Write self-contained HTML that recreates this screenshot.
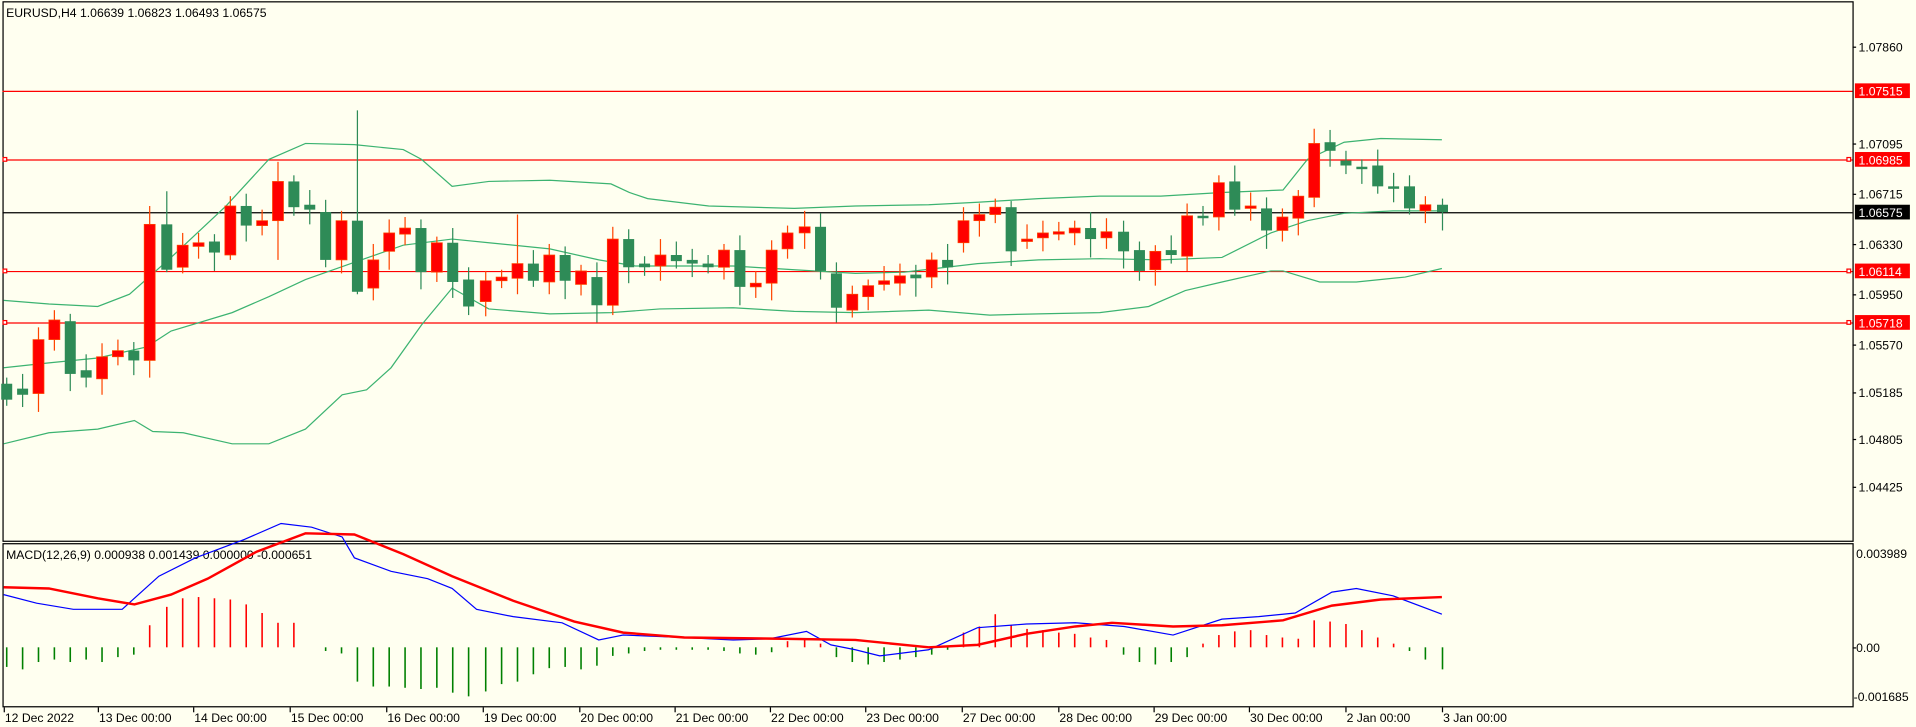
<!DOCTYPE html>
<html><head><meta charset="utf-8"><style>
html,body{margin:0;padding:0;background:#fffff0;overflow:hidden}
svg{display:block}
text{font-family:"Liberation Sans",sans-serif;font-size:10px;fill:#000}
</style></head><body>
<svg id="s" width="1916" height="727" viewBox="0 0 1568 593" preserveAspectRatio="none" xmlns="http://www.w3.org/2000/svg">
<rect width="1568" height="593" fill="#fffff0"/>
<rect x="2.5" y="1.5" width="1514" height="440" fill="none" stroke="#000"/>
<rect x="2.5" y="443.5" width="1514" height="133" fill="none" stroke="#000"/>
<text x="5" y="14">EURUSD,H4  1.06639 1.06823 1.06493 1.06575</text>
<text x="5" y="456">MACD(12,26,9) 0.000938 0.001439 0.000000 -0.000651</text>
<g id="g"></g>
</svg>
<script>
var g=document.getElementById('g'),h='',SP=13.05;
function L(x1,y1,x2,y2,c,w){h+='<line x1="'+x1+'" y1="'+y1+'" x2="'+x2+'" y2="'+y2+'" stroke="'+c+'" stroke-width="'+(w||1)+'"/>';}
function P(pts,c,w){h+='<polyline fill="none" stroke="'+c+'" stroke-width="'+(w||1)+'" points="'+pts.map(function(p){return p.join(',')}).join(' ')+'"/>';}
function T(x,y,s,a){h+='<text x="'+x+'" y="'+y+'"'+(a||'')+'>'+s+'</text>';}
[[74,'1.07515','#f00'],[130,'1.06985','#f00'],[173,'1.06575','#000'],[221,'1.06114','#f00'],[263,'1.05718','#f00']].forEach(function(l){
 L(2,l[0]+.5,1516,l[0]+.5,l[2]);
 h+='<rect x="1518" y="'+(l[0]-6)+'" width="45" height="12" fill="'+l[2]+'"/>';
 T(1521,l[0]+4,l[1],' style="fill:#fff"');
 if(l[2]=='#f00'&&l[0]!=74){h+='<rect x="2.5" y="'+(l[0]-1.5)+'" width="3" height="3" fill="#fff" stroke="#f00"/><rect x="1511.5" y="'+(l[0]-1.5)+'" width="3" height="3" fill="#fff" stroke="#f00"/>';}
});
[[38,'1.07860'],[117,'1.07095'],[158,'1.06715'],[199,'1.06330'],[240,'1.05950'],[281,'1.05570'],[320,'1.05185'],[358,'1.04805'],[397,'1.04425']].forEach(function(t){L(1516,t[0]+.5,1519,t[0]+.5,'#000');T(1521,t[0]+4,t[1]);});
T(1519,455,'0.003989');T(1519,532,'0.00');L(1516,528.5,1519,528.5,'#000');T(1517,572,'-0.001685');
var bc='#3cb371';
P([[3,245],[40,248],[80,250],[106,240],[140,210],[185,168],[220,130],[250,117],[290,118],[330,122],[345,130],[370,152],[400,148],[450,147],[500,150],[515,157],[530,162],[580,168],[650,170],[700,168],[760,167],[800,165],[850,162],[900,160],[950,160],[1000,157],[1050,155],[1070,130],[1100,116],[1130,113],[1180,114]],bc);
P([[3,300],[40,296],[80,292],[120,283],[140,270],[190,255],[220,242],[250,228],[290,214],[330,200],[370,195],[400,198],[450,203],[490,212],[520,217],[600,217],[650,220],[700,223],[740,222],[800,215],[850,212],[900,211],[950,212],[1000,210],[1040,190],[1070,180],[1100,174],[1140,172],[1180,172]],bc);
P([[3,362],[40,353],[80,350],[110,343],[125,352],[150,353],[190,362],[220,362],[250,350],[280,322],[300,318],[320,300],[345,265],[370,235],[400,252],[450,256],[500,255],[540,252],[600,251],[650,254],[700,255],[760,253],[810,257],[850,256],[900,255],[940,250],[970,237],[1000,230],[1040,221],[1050,221],[1080,230],[1110,230],[1150,226],[1180,219]],bc);
var C=[[313,326,'g'],[317,322,'g'],[277,321,'r'],[261,277,'r'],[262,305,'g'],[302,308,'g'],[291,309,'r'],[286,291,'r'],[286,294,'g'],[183,294,'r'],[183,220,'g'],[200,218,'r'],[198,201,'r'],[197,206,'g'],[168,208,'r'],[168,184,'g'],[180,184,'r'],[148,180,'r'],[148,169,'g'],[167,171,'g'],[173,212,'g'],[180,212,'r'],[180,238,'g'],[212,235,'r'],[190,205,'r'],[186,191,'r'],[186,222,'g'],[198,222,'r'],[198,230,'g'],[228,250,'g'],[229,246,'r'],[226,229,'r'],[215,227,'r'],[215,229,'g'],[208,230,'r'],[208,229,'g'],[221,232,'r'],[226,249,'g'],[195,249,'r'],[195,218,'g'],[215,218,'g'],[208,217,'r'],[208,213,'g'],[212,215,'g'],[215,218,'g'],[204,218,'r'],[204,234,'g'],[231,234,'r'],[204,231,'r'],[190,203,'r'],[185,190,'r'],[185,221,'g'],[223,251,'g'],[240,253,'r'],[233,242,'r'],[229,232,'r'],[225,231,'r'],[224,227,'g'],[212,226,'r'],[212,218,'g'],[180,198,'r'],[175,180,'r'],[169,175,'r'],[169,205,'g'],[195,197,'r'],[190,194,'r'],[189,191,'r'],[186,190,'r'],[186,195,'g'],[189,194,'r'],[189,205,'g'],[204,221,'g'],[205,220,'r'],[204,208,'g'],[176,209,'r'],[176,178,'g'],[149,177,'r'],[148,171,'g'],[168,170,'r'],[170,188,'g'],[177,188,'r'],[160,178,'r'],[117,161,'r'],[116,123,'g'],[131,135,'g'],[136,138,'g'],[135,152,'g'],[152,154,'g'],[152,170,'g'],[167,172,'r'],[167,173,'g']];
var spec={9:[168,308],10:[156,222],22:[90,240],17:[132,212],32:[175,240],14:[160,212],15:[158,197]};
C.forEach(function(c,i){var x=Math.round(5+SP*i),col=c[2]=='g'?'#2e8b57':'#f00',wc=c[2]=='g'?'#2e8b57':'#ff4500';
 var w=spec[i]||[c[0]-5-(i*7%9),c[1]+5+(i*5%11)];
 L(x+.5,w[0],x+.5,w[1],wc);
 h+='<rect x="'+(x-4)+'" y="'+c[0]+'" width="9" height="'+Math.max(1,c[1]-c[0])+'" fill="'+col+'"'+(c[2]=='r'?' stroke="#ff4500" stroke-width="0.6"':'')+'/>';
});
var H=[-16,-18,-12,-10,-12,-10,-12,-8,-6,18,33,40,41,40,39,35,28,20,20,0,-3,-5,-28,-32,-32,-33,-34,-33,-37,-40,-36,-30,-28,-22,-17,-16,-18,-15,-7,-5,-3,-2,-2,-2,-2,-3,-5,-6,-4,5,7,3,-8,-12,-14,-12,-10,-8,-6,-2,12,17,27,18,15,14,12,11,8,6,-6,-12,-14,-12,-8,3,10,13,14,10,8,7,22,21,19,14,8,3,-3,-10,-18];
H.forEach(function(v,i){var x=Math.round(5+SP*i)+.5;if(v)L(x,528,x,528-v,v>0?'#f00':'#008000',1.3);});
P([[3,485],[30,492],[60,497],[100,497],[130,470],[160,455],[200,440],[230,427],[255,430],[280,438],[290,455],[320,466],[350,472],[370,480],[390,497],[420,503],[460,508],[490,522],[510,518],[560,520],[600,522],[630,521],[660,515],[680,526],[700,530],[720,535],[760,530],[800,512],[840,509],[880,508],[920,511],[960,518],[1000,505],[1030,503],[1060,500],[1090,483],[1110,480],[1140,486],[1180,501]],'#00f');
P([[3,479],[40,480],[80,488],[110,493],[140,485],[170,472],[210,450],[250,435],[290,436],[330,452],[370,470],[420,490],[470,507],[510,516],[560,520],[640,521],[700,522],[760,528],[800,526],[840,517],[880,511],[910,508],[960,511],[1000,510],[1050,506],[1090,494],[1130,489],[1180,487]],'#f00',2);
[[3,'12 Dec 2022'],[80,'13 Dec 00:00'],[158,'14 Dec 00:00'],[237,'15 Dec 00:00'],[316,'16 Dec 00:00'],[395,'19 Dec 00:00'],[474,'20 Dec 00:00'],[552,'21 Dec 00:00'],[630,'22 Dec 00:00'],[708,'23 Dec 00:00'],[787,'27 Dec 00:00'],[866,'28 Dec 00:00'],[944,'29 Dec 00:00'],[1022,'30 Dec 00:00'],[1101,'2 Jan 00:00'],[1180,'3 Jan 00:00']].forEach(function(t){L(t[0]+.5,577,t[0]+.5,581,'#000');T(t[0]+1,589,t[1]);});
g.innerHTML=h;
</script>
</body></html>
